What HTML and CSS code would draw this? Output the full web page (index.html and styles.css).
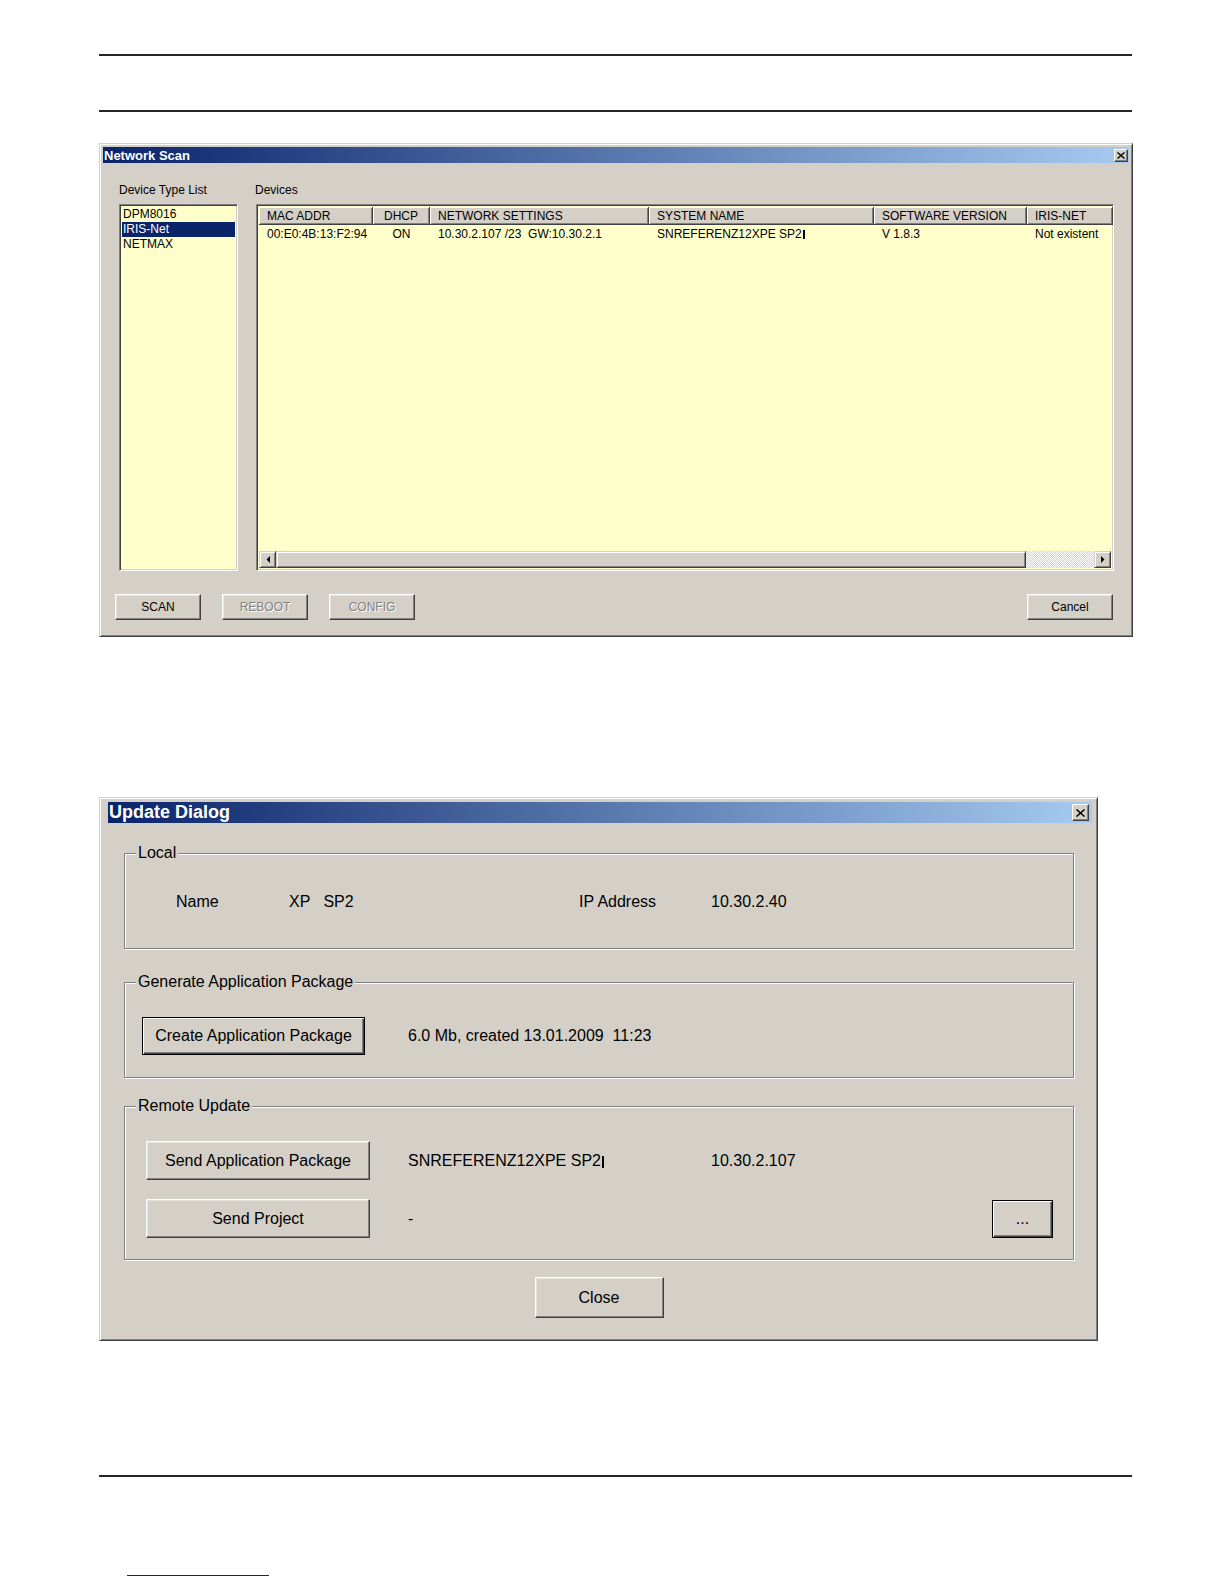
FILE: index.html
```html
<!DOCTYPE html>
<html lang="en">

<head>
  <meta charset="UTF-8" />
  <title>Network Scan / Update Dialog</title>
  <link rel="stylesheet" href="styles.css">
</head>

<body>
  <div class="page">
    <div class="rule rule-first"></div>
    <div class="rule rule-second"></div>

    <!-- Network Scan window -->
    <div class="window scan-window">
      <div class="titlebar">
        <span class="title">Network Scan</span>
        <span class="close-btn">
          <svg width="8" height="7" viewBox="0 0 8 7"><path d="M0.5 0.5L7.5 6.5M7.5 0.5L0.5 6.5" stroke="#000" stroke-width="1.4" fill="none" /></svg>
        </span>
      </div>
      <div class="scan-body">
        <div class="scan-grid">
          <div class="field-label">Device Type List</div>
          <div class="field-label">Devices</div>
          <ul class="listbox">
            <li>DPM8016</li>
            <li class="selected">IRIS-Net</li>
            <li>NETMAX</li>
          </ul>
          <div class="devices">
            <div class="devices-head">
              <span>MAC ADDR</span>
              <span class="c-center">DHCP</span>
              <span>NETWORK SETTINGS</span>
              <span>SYSTEM NAME</span>
              <span>SOFTWARE VERSION</span>
              <span>IRIS-NET</span>
            </div>
            <div class="devices-rows">
              <div class="devices-row">
                <span>00:E0:4B:13:F2:94</span>
                <span class="c-center">ON</span>
                <span>10.30.2.107 /23  GW:10.30.2.1</span>
                <span>SNREFERENZ12XPE SP2<i class="cursor-mark"></i></span>
                <span>V 1.8.3</span>
                <span>Not existent</span>
              </div>
            </div>
            <div class="hscroll">
              <span class="scroll-btn">
                <svg width="4" height="7" viewBox="0 0 4 7"><polygon points="4,0 0.5,3.5 4,7" fill="#000" /></svg>
              </span>
              <span class="scroll-thumb"></span>
              <span class="scroll-track"></span>
              <span class="scroll-btn">
                <svg width="4" height="7" viewBox="0 0 4 7"><polygon points="0,0 3.5,3.5 0,7" fill="#000" /></svg>
              </span>
            </div>
          </div>
        </div>
        <div class="scan-buttons">
          <button class="btn btn-small">SCAN</button>
          <button class="btn btn-small" disabled>REBOOT</button>
          <button class="btn btn-small" disabled>CONFIG</button>
          <button class="btn btn-small btn-cancel">Cancel</button>
        </div>
      </div>
    </div>

    <!-- Update Dialog window -->
    <div class="window update-window">
      <div class="titlebar">
        <span class="title">Update Dialog</span>
        <span class="close-btn">
          <svg width="9" height="8" viewBox="0 0 9 8"><path d="M0.5 0.5L8.5 7.5M8.5 0.5L0.5 7.5" stroke="#000" stroke-width="1.5" fill="none" /></svg>
        </span>
      </div>
      <div class="update-body">
        <fieldset class="group">
          <legend>Local</legend>
          <div class="local-grid">
            <span>Name</span>
            <span class="pre">XP   SP2</span>
            <span>IP Address</span>
            <span>10.30.2.40</span>
          </div>
        </fieldset>

        <fieldset class="group group-generate">
          <legend>Generate Application Package</legend>
          <div class="action-row">
            <button class="btn btn-large btn-default btn-create">Create Application Package</button>
            <span class="info pre">6.0 Mb, created 13.01.2009  11:23</span>
          </div>
        </fieldset>

        <fieldset class="group group-remote">
          <legend>Remote Update</legend>
          <div class="remote-grid">
            <button class="btn btn-large">Send Application Package</button>
            <span class="info">SNREFERENZ12XPE SP2<i class="cursor-mark"></i></span>
            <span>10.30.2.107</span>
            <span></span>
            <button class="btn btn-large">Send Project</button>
            <span class="info">-</span>
            <span></span>
            <button class="btn btn-large btn-default btn-browse">...</button>
          </div>
        </fieldset>

        <div class="close-row">
          <button class="btn btn-close">Close</button>
        </div>
      </div>
    </div>

    <div class="rule rule-bottom"></div>
    <div class="footer-link"></div>
  </div>
</body>

</html>
```
FILE: styles.css
```css
* {
  box-sizing: border-box;
}

body {
  margin: 0;
  background: #fff;
  font-family: "Liberation Sans", Arial, sans-serif;
  color: #000;
}

.page {
  width: 1224px;
  padding: 0 0 8px 99px;
}

.rule {
  width: 1033px;
  height: 2px;
  background: #262626;
}

.rule-first {
  margin-top: 54px;
}

.rule-second {
  margin-top: 54px;
}

.rule-bottom {
  margin-top: 134px;
}

.footer-link {
  width: 142px;
  height: 1px;
  margin: 98px 0 0 28px;
  background: #1c1c8e;
}

.pre {
  white-space: pre;
}

/* window frame */

.window {
  background: #d4d0c8;
  border: 1px solid;
  border-color: #d4d0c8 #404040 #404040 #d4d0c8;
  box-shadow: inset 1px 1px #fff, inset -1px -1px #808080;
}

.titlebar {
  display: flex;
  align-items: center;
  justify-content: space-between;
  padding-left: 1px;
  background: linear-gradient(90deg, #0a246a, #a6caf0);
  color: #fff;
  font-weight: bold;
  white-space: nowrap;
}

.close-btn {
  display: flex;
  align-items: center;
  justify-content: center;
  background: #d4d0c8;
  border: 1px solid;
  border-color: #fff #404040 #404040 #fff;
  box-shadow: inset -1px -1px #808080;
}

.btn {
  padding: 0;
  font-family: inherit;
  color: #000;
  background: #d4d0c8;
  border: 1px solid;
  border-color: #fff #404040 #404040 #fff;
  box-shadow: inset -1px -1px #808080, inset 1px 1px #e6e3dc;
  white-space: nowrap;
}

.btn:disabled {
  color: #808080;
  text-shadow: 1px 1px #fff;
}

.btn-default {
  border-color: #000;
  box-shadow: inset 1px 1px #fff, inset -1px -1px #404040, inset -2px -2px #808080;
}

/* Network Scan */

.scan-window {
  width: 1034px;
  margin-top: 31px;
  padding: 3px;
}

.scan-window .titlebar {
  height: 16px;
  font-size: 13px;
}

.scan-window .close-btn {
  width: 14px;
  height: 13px;
  margin-right: 1px;
}

.scan-body {
  padding: 20px 15px 13px 16px;
  font-size: 12px;
}

.scan-grid {
  display: grid;
  grid-template-columns: 119px 859px;
  column-gap: 17px;
  row-gap: 7px;
}

.field-label {
  line-height: 14px;
}

.listbox,
.devices {
  height: 367px;
  margin: 0;
  padding: 0;
  background: #ffffcc;
  border: 1px solid;
  border-color: #808080 #fff #fff #808080;
  box-shadow: inset 1px 1px #404040, inset -1px -1px #d4d0c8;
}

.listbox {
  list-style: none;
  padding: 2px 2px 0;
}

.listbox li {
  height: 15px;
  line-height: 15px;
  padding-left: 1px;
}

.listbox li.selected {
  background: #0a246a;
  color: #fff;
}

.devices {
  display: flex;
  flex-direction: column;
  margin-left: 1px;
  padding: 2px;
}

.devices-head,
.devices-row {
  display: grid;
  grid-template-columns: 114px 57px 219px 225px 153px 86px;
}

.devices-head span {
  height: 18px;
  line-height: 19px;
  padding-left: 8px;
  background: #d4d0c8;
  border-right: 1px solid #404040;
  border-bottom: 1px solid #404040;
  box-shadow: inset 1px 1px #fff, inset -1px -1px #808080;
  white-space: nowrap;
  overflow: hidden;
}

.devices-rows {
  flex: 1;
}

.devices-row span {
  height: 18px;
  line-height: 19px;
  padding-left: 8px;
  white-space: pre;
  overflow: hidden;
}

.devices-head .c-center,
.devices-row .c-center {
  padding-left: 0;
  text-align: center;
}

.cursor-mark {
  display: inline-block;
  width: 2px;
  height: 9px;
  margin-left: 1px;
  background: #000;
  vertical-align: -1px;
}

.hscroll {
  display: flex;
  height: 17px;
}

.scroll-btn,
.scroll-thumb {
  background: #d4d0c8;
  border: 1px solid;
  border-color: #d4d0c8 #404040 #404040 #d4d0c8;
  box-shadow: inset 1px 1px #fff, inset -1px -1px #808080;
}

.scroll-btn {
  display: flex;
  align-items: center;
  justify-content: center;
  width: 17px;
  flex: none;
}

.scroll-thumb {
  width: 750px;
  flex: none;
}

.scroll-track {
  flex: 1;
  background-color: #d4d0c8;
  background-image: repeating-conic-gradient(#fff 0 25%, #d4d0c8 0 50%);
  background-size: 2px 2px;
}

.scan-buttons {
  display: flex;
  gap: 21px;
  margin: 23px 1px 0 -4px;
}

.btn-small {
  width: 86px;
  height: 26px;
  font-size: 12px;
}

.btn-cancel {
  margin-left: auto;
}

/* Update Dialog */

.update-window {
  width: 999px;
  margin-top: 160px;
  padding: 4px 5px 4px 8px;
}

.update-window .titlebar {
  height: 21px;
  font-size: 18px;
}

.update-window .close-btn {
  width: 17px;
  height: 17px;
  margin-right: 3px;
}

.update-body {
  padding: 21px 18px 18px 16px;
  font-size: 16px;
}

.group {
  margin: 0;
  padding: 0;
  min-width: 0;
  border: 1px solid #808080;
  box-shadow: 1px 1px #fff, inset 1px 1px #fff;
}

.group legend {
  margin-left: 11px;
  padding: 0 2px;
  line-height: 18px;
  background: #d4d0c8;
}

.group-generate {
  margin-top: 24px;
}

.group-remote {
  margin-top: 19px;
}

.local-grid {
  display: grid;
  grid-template-columns: 113px 290px 132px 1fr;
  padding: 31px 0 37px 51px;
  line-height: 18px;
}

.action-row {
  display: flex;
  align-items: center;
  padding: 26px 0 22px 17px;
}

.btn-large {
  height: 39px;
  font-size: 16px;
}

.btn-create {
  width: 223px;
  height: 38px;
}

.action-row .info {
  margin-left: 43px;
}

.remote-grid {
  display: grid;
  grid-template-columns: 224px 341px 1fr 61px;
  row-gap: 19px;
  align-items: center;
  padding: 26px 20px 21px 21px;
}

.remote-grid .info {
  padding-left: 38px;
}

.remote-grid .cursor-mark {
  height: 12px;
  vertical-align: -2px;
}

.btn-browse {
  height: 38px;
  align-self: end;
}

.close-row {
  display: flex;
  justify-content: center;
  margin-top: 17px;
}

.btn-close {
  width: 129px;
  height: 41px;
  font-size: 16px;
}
```
